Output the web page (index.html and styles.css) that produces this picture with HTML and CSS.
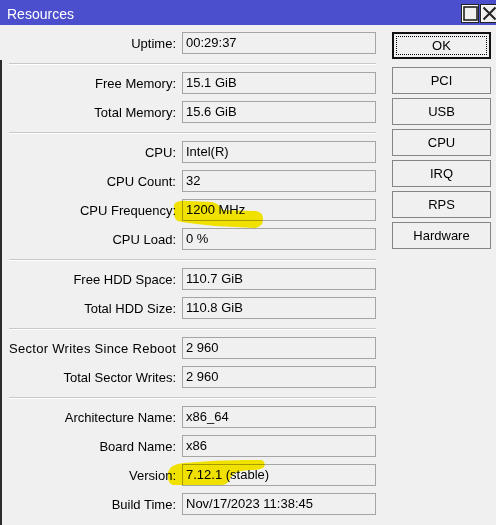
FILE: index.html
```html
<!DOCTYPE html>
<html lang="en">
<head>
  <meta charset="UTF-8">
  <title>Resources</title>
  <link rel="stylesheet" href="styles.css">
</head>
<body>

<div class="window">
  <div class="titlebar">
    <span class="title">Resources</span>
    <div class="title-btns">
      <span class="tbtn">
        <svg width="15" height="15" viewBox="0 0 15 15"><rect x="1" y="1" width="13" height="13" fill="none" stroke="#222" stroke-width="1.6"/></svg>
      </span>
      <span class="tbtn">
        <svg width="15" height="15" viewBox="0 0 15 15"><path d="M1.5 1.5 L13.5 13.5 M13.5 1.5 L1.5 13.5" stroke="#222" stroke-width="2"/></svg>
      </span>
    </div>
  </div>

  <div class="content">
    <div class="fields">
      <div class="group">
        <div class="row"><label>Uptime:</label><div class="value">00:29:37</div></div>
      </div>
      <div class="sep"></div>
      <div class="group">
        <div class="row"><label>Free Memory:</label><div class="value">15.1 GiB</div></div>
        <div class="row"><label>Total Memory:</label><div class="value">15.6 GiB</div></div>
      </div>
      <div class="sep"></div>
      <div class="group">
        <div class="row"><label>CPU:</label><div class="value">Intel(R)</div></div>
        <div class="row"><label>CPU Count:</label><div class="value">32</div></div>
        <div class="row"><label>CPU Frequency:</label><div class="value">1200 MHz</div></div>
        <div class="row"><label>CPU Load:</label><div class="value">0 %</div></div>
      </div>
      <div class="sep"></div>
      <div class="group">
        <div class="row"><label>Free HDD Space:</label><div class="value">110.7 GiB</div></div>
        <div class="row"><label>Total HDD Size:</label><div class="value">110.8 GiB</div></div>
      </div>
      <div class="sep"></div>
      <div class="group">
        <div class="row"><label class="long">Sector Writes Since Reboot:</label><div class="value">2 960</div></div>
        <div class="row"><label>Total Sector Writes:</label><div class="value">2 960</div></div>
      </div>
      <div class="sep"></div>
      <div class="group">
        <div class="row"><label>Architecture Name:</label><div class="value">x86_64</div></div>
        <div class="row"><label>Board Name:</label><div class="value">x86</div></div>
        <div class="row"><label>Version:</label><div class="value">7.12.1 (stable)</div></div>
        <div class="row"><label>Build Time:</label><div class="value">Nov/17/2023 11:38:45</div></div>
      </div>
    </div>

    <div class="buttons">
      <button class="btn default">OK</button>
      <div class="btn-list">
        <button class="btn">PCI</button>
        <button class="btn">USB</button>
        <button class="btn">CPU</button>
        <button class="btn">IRQ</button>
        <button class="btn">RPS</button>
        <button class="btn">Hardware</button>
      </div>
    </div>
  </div>

  <!-- marker strokes drawn over the screenshot -->
  <svg class="marker" width="496" height="525" viewBox="0 0 496 525">
    <path d="M174,205 Q176,200 188,201 L212,202 Q220,204 222,210 L256,211 Q263,212 263,219 Q263,227 255,228 L215,226 Q195,224 182,222 Q174,221 174,214 Z"/>
    <path d="M168,472 Q170,464 184,463 Q215,460 245,460 L262,460 Q266,462 264,467 Q262,470 250,470 Q234,471 231,477 Q229,484 222,485 L173,485 Q167,484 168,472 Z"/>
  </svg>
</div>

</body>
</html>
```

FILE: styles.css
```css
body { margin: 0; background: #f0f0f0; color: #000; font-family: "Liberation Sans", Arial, sans-serif; font-size: 13px; overflow: hidden; }
.window { position: relative; width: 496px; height: 525px; overflow: hidden; }

.titlebar { height: 25px; background: #4b4fcd; color: #fff; display: flex; align-items: flex-start; }
.title { font-size: 14px; padding: 6px 0 0 7px; }
.title-btns { margin-left: auto; margin-right: -2px; margin-top: 4px; display: flex; gap: 1px; }
.tbtn { width: 18px; height: 19px; box-sizing: border-box; border: 1px solid #222; background: #f0f0f0; box-shadow: inset 1px 1px 0 #fff; display: flex; align-items: center; justify-content: center; }

.content { display: flex; height: 500px; background: linear-gradient(#2b2b2b, #2b2b2b) no-repeat 0 35px / 2px 100%; }

.fields { width: 367px; padding: 7px 0 0 9px; }
.group { display: flex; flex-direction: column; gap: 7px; }
.row { display: flex; align-items: center; height: 22px; }
.row label { width: 167px; margin-right: 6px; text-align: right; white-space: nowrap; overflow: hidden; }
.row label.long { letter-spacing: 0.3px; }
.value { width: 194px; height: 22px; box-sizing: border-box; border: 1px solid #a5a5a5; padding: 0 3px; line-height: 20px; white-space: nowrap; }
.sep { border-top: 1px solid #c8c8c8; border-bottom: 1px solid #fff; margin: 9px 0 7px; }

.buttons { width: 99px; margin-left: 16px; padding-top: 7px; display: flex; flex-direction: column; gap: 8px; }
.btn-list { display: flex; flex-direction: column; gap: 4px; }
.btn { height: 27px; width: 99px; box-sizing: border-box; background: #f0f0f0; border: 1px solid #858585; font-family: "Liberation Sans", Arial, sans-serif; font-size: 13px; color: #000; padding: 0; }
.btn.default { border: 2px solid #111; outline: 1px dotted #000; outline-offset: -5px; }

.marker { position: absolute; top: 0; left: 0; pointer-events: none; mix-blend-mode: multiply; }
.marker path { fill: #fff000; }
```
